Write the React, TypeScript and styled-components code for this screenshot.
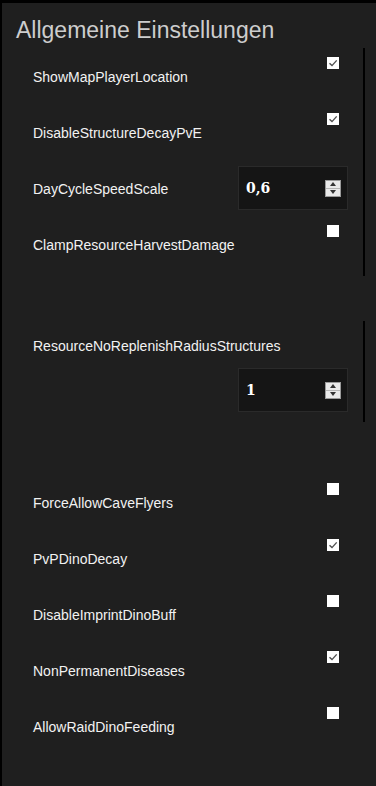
import React from 'react';
import styled, { createGlobalStyle } from 'styled-components';

const GlobalStyle = createGlobalStyle`
  html, body {
    margin: 0;
    padding: 0;
    background: #1f1f1f;
  }
  * {
    box-sizing: border-box;
  }
`;

const Frame = styled('div')`
  min-height: 786px;
  border-top: 3px solid #000;
  border-left: 2px solid #000;
  background: #1f1f1f;
  font-family: 'Liberation Sans', Arial, sans-serif;
  color: #f2f2f2;
`;

const Title = styled('h1')`
  margin: 0;
  padding: 14px 0 0 14px;
  height: 45px;
  font-size: 23px;
  line-height: 26px;
  font-weight: normal;
  color: #cdcdcd;
`;

const Group = styled('section')<{ $divider?: boolean; $gap?: number }>`
  width: 363px;
  margin-top: ${p => p.$gap ?? 0}px;
  padding: 0 15px ${p => (p.$divider ? 4 : 0)}px 31px;
  border-right: 2px solid ${p => (p.$divider ? '#000' : 'transparent')};
`;

const Row = styled('div')<{ $stacked?: boolean }>`
  display: flex;
  flex-direction: ${p => (p.$stacked ? 'column' : 'row')};
  align-items: ${p => (p.$stacked ? 'stretch' : 'center')};
  justify-content: space-between;
  min-height: 56px;
  padding-bottom: ${p => (p.$stacked ? 6 : 0)}px;
`;

const Label = styled('span')<{ $stacked?: boolean }>`
  display: flex;
  align-items: center;
  height: ${p => (p.$stacked ? '47px' : 'auto')};
  padding-top: 2px;
  font-size: 14px;
  color: #f2f2f2;
`;

const CheckBox = styled('span')`
  align-self: flex-start;
  display: flex;
  align-items: center;
  justify-content: center;
  width: 12px;
  height: 12px;
  margin: 9px 9px 0 0;
  background: #fff;
  svg {
    width: 10px;
    height: 10px;
  }
`;

const NumberBox = styled('div')<{ $stacked?: boolean }>`
  display: flex;
  align-items: center;
  justify-content: space-between;
  align-self: ${p => (p.$stacked ? 'flex-end' : 'center')};
  width: 110px;
  height: 44px;
  padding: 0 6px 0 7px;
  background: #151515;
  border: 1px solid #2a2a2a;
  font-family: 'DejaVu Serif', 'Liberation Serif', serif;
  font-weight: bold;
  font-size: 14px;
  color: #fff;
`;

const Spinner = styled('span')`
  display: flex;
  flex-direction: column;
  width: 16px;
  height: 17px;
  border: 1px solid #9a9a9a;
  background: #e9e9e9;
  span {
    flex: 1;
    display: flex;
    align-items: center;
    justify-content: center;
  }
  span + span {
    border-top: 1px solid #b5b5b5;
  }
`;

function Check({ checked }: { checked: boolean }) {
  return (
    <CheckBox>
      {checked && (
        <svg viewBox="0 0 10 10">
          <path d="M1.5 5.2 L4 7.6 L8.7 2.4" fill="none" stroke="#505050" strokeWidth="1.4" />
        </svg>
      )}
    </CheckBox>
  );
}

function NumberInput({ value, stacked }: { value: string; stacked?: boolean }) {
  return (
    <NumberBox $stacked={stacked}>
      <span>{value}</span>
      <Spinner>
        <span>
          <svg width="6" height="4" viewBox="0 0 6 4"><path d="M0 4 L3 0 L6 4 Z" fill="#333" /></svg>
        </span>
        <span>
          <svg width="6" height="4" viewBox="0 0 6 4"><path d="M0 0 L3 4 L6 0 Z" fill="#333" /></svg>
        </span>
      </Spinner>
    </NumberBox>
  );
}

type Setting =
  | { name: string; kind: 'bool'; checked: boolean }
  | { name: string; kind: 'number'; value: string; stacked?: boolean };

const groups: { divider: boolean; gap: number; items: Setting[] }[] = [
  {
    divider: true,
    gap: 0,
    items: [
      { name: 'ShowMapPlayerLocation', kind: 'bool', checked: true },
      { name: 'DisableStructureDecayPvE', kind: 'bool', checked: true },
      { name: 'DayCycleSpeedScale', kind: 'number', value: '0,6' },
      { name: 'ClampResourceHarvestDamage', kind: 'bool', checked: false },
    ],
  },
  {
    divider: true,
    gap: 45,
    items: [{ name: 'ResourceNoReplenishRadiusStructures', kind: 'number', value: '1', stacked: true }],
  },
  {
    divider: false,
    gap: 52,
    items: [
      { name: 'ForceAllowCaveFlyers', kind: 'bool', checked: false },
      { name: 'PvPDinoDecay', kind: 'bool', checked: true },
      { name: 'DisableImprintDinoBuff', kind: 'bool', checked: false },
      { name: 'NonPermanentDiseases', kind: 'bool', checked: true },
      { name: 'AllowRaidDinoFeeding', kind: 'bool', checked: false },
    ],
  },
];

export default function App() {
  return (
    <>
      <GlobalStyle />
      <Frame>
        <Title>Allgemeine Einstellungen</Title>
        {groups.map((g, i) => (
          <Group key={i} $divider={g.divider} $gap={g.gap}>
            {g.items.map(item => {
              const stacked = item.kind === 'number' && !!item.stacked;
              return (
                <Row key={item.name} $stacked={stacked}>
                  <Label $stacked={stacked}>{item.name}</Label>
                  {item.kind === 'bool' ? (
                    <Check checked={item.checked} />
                  ) : (
                    <NumberInput value={item.value} stacked={stacked} />
                  )}
                </Row>
              );
            })}
          </Group>
        ))}
      </Frame>
    </>
  );
}
